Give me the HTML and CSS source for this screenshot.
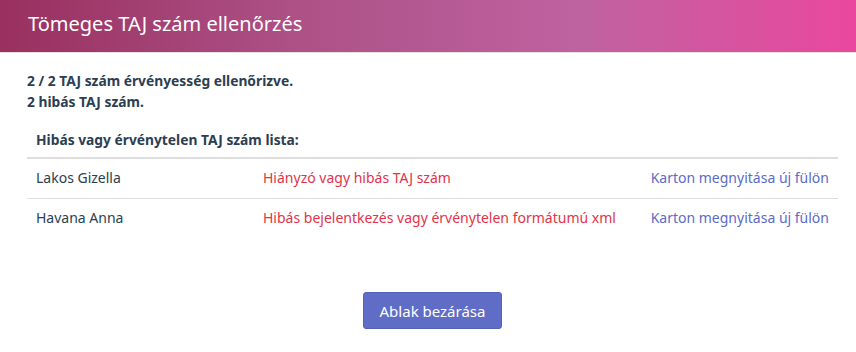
FILE: index.html
```html
<!DOCTYPE html>
<html lang="hu">
<head>
  <meta charset="UTF-8">
  <title>Tömeges TAJ szám ellenőrzés</title>
  <link rel="stylesheet" href="styles.css">
</head>
<body>
  <div class="modal-header">Tömeges TAJ szám ellenőrzés</div>

  <div class="modal-body">
    <div class="summary">
      <p>2 / 2 TAJ szám érvényesség ellenőrizve.</p>
      <p>2 hibás TAJ szám.</p>
    </div>

    <table class="result-table">
      <thead>
        <tr>
          <th colspan="3">Hibás vagy érvénytelen TAJ szám lista:</th>
        </tr>
      </thead>
      <tbody>
        <tr>
          <td class="name">Lakos Gizella</td>
          <td class="error">Hiányzó vagy hibás TAJ szám</td>
          <td class="link"><a href="#">Karton megnyitása új fülön</a></td>
        </tr>
        <tr>
          <td class="name">Havana Anna</td>
          <td class="error">Hibás bejelentkezés vagy érvénytelen formátumú xml</td>
          <td class="link"><a href="#">Karton megnyitása új fülön</a></td>
        </tr>
      </tbody>
    </table>
  </div>

  <div class="modal-footer">
    <button type="button">Ablak bezárása</button>
  </div>
</body>
</html>
```

FILE: styles.css
```css
* {
  box-sizing: border-box;
}

body {
  margin: 0;
  font-family: 'Noto Sans', sans-serif;
  background: #fff;
  color: #2c3e50;
}

.modal-header {
  height: 53px;
  padding: 0 28px;
  display: flex;
  align-items: center;
  padding-bottom: 5px;
  color: #fff;
  font-size: 20px;
  background: linear-gradient(90deg, #99305f 0%, #ad5187 35%, #bf62a0 68%, #ea489e 100%);
  border-bottom: 1px solid #e3e3e3;
}

.modal-body {
  padding: 16px 18px 0 27px;
}

.summary {
  font-size: 13.8px;
  font-weight: 700;
  line-height: 21px;
  padding-top: 1px;
}

.summary p {
  margin: 0;
}

.result-table {
  width: 100%;
  margin-top: 11px;
  border-collapse: collapse;
  font-size: 14px;
}

.result-table th {
  text-align: left;
  font-size: 13.8px;
  font-weight: 700;
  padding: 7px 9px 8px;
  border-bottom: 2px solid #dedede;
}

.result-table td {
  height: 40px;
  padding: 0 9px 1px;
  border-bottom: 1px solid #dedede;
}

.result-table tr:last-child td {
  border-bottom: none;
}

.result-table .name {
  width: 227px;
}

.result-table .error {
  color: #e2334a;
}

.result-table .link {
  text-align: right;
}

.result-table a {
  color: #5c6bc8;
  text-decoration: none;
}

.modal-footer {
  display: flex;
  justify-content: center;
  padding-top: 54px;
  padding-left: 9px;
}

.modal-footer button {
  width: 139px;
  height: 37px;
  background-color: #5f6dc6;
  color: #fff;
  font-family: inherit;
  font-size: 15px;
  border: 1px solid #5462bb;
  border-radius: 3px;
  cursor: pointer;
}
```
